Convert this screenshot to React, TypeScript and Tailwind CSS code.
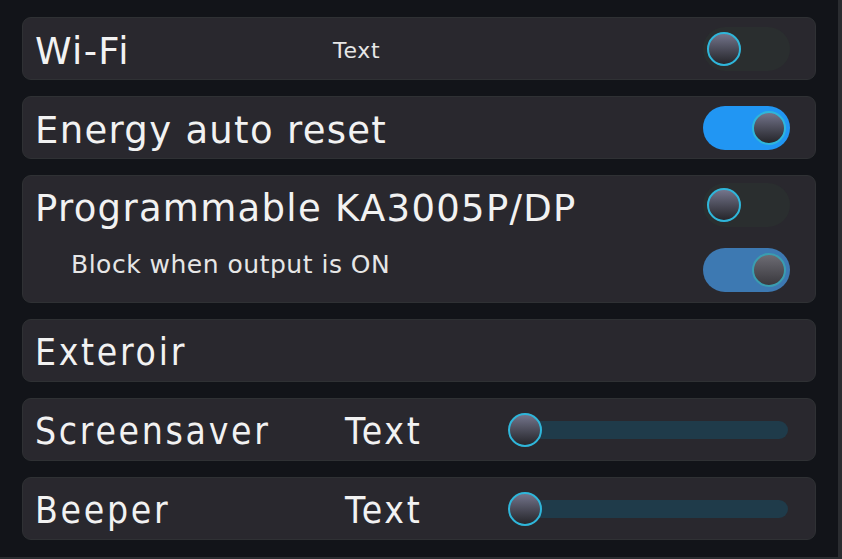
import React from 'react';

function Knob({ dim = false }: { dim?: boolean }) {
  return (
    <div
      className={
        dim
          ? 'h-[34px] w-[34px] rounded-full border-2 border-[#3a9db0] bg-gradient-to-b from-[#6d6c74] to-[#3a393e]'
          : 'h-[34px] w-[34px] rounded-full border-2 border-[#2fb6da] bg-gradient-to-b from-[#74758c] to-[#26262b]'
      }
    />
  );
}

function Toggle({ on = false, dim = false }: { on?: boolean; dim?: boolean }) {
  const track = on ? (dim ? 'bg-[#3d79b2]' : 'bg-[#2196f3]') : 'bg-[#2a2e2f]';
  return (
    <div className={`flex h-[44px] w-[87px] items-center rounded-full px-[4px] ${track} ${on ? 'justify-end' : 'justify-start'}`}>
      <Knob dim={dim} />
    </div>
  );
}

function Slider() {
  return (
    <div className="relative flex h-[34px] flex-1 items-center">
      <div className="ml-[4px] h-[18px] flex-1 rounded-full bg-[#1f3b4a]" />
      <div className="absolute left-0 top-0">
        <Knob />
      </div>
    </div>
  );
}

const card = 'rounded-[9px] border border-[#2f3134] bg-[#29282e]';
const big = "relative font-['DejaVu_Sans',sans-serif] text-[37px] leading-[44px] tracking-[1.3px] text-[#f2f2f2]";
const narrow =
  "relative top-[2px] font-['DejaVu_Sans_Condensed','DejaVu_Sans',sans-serif] font-stretch-condensed text-[37px] leading-[44px] tracking-[2.7px] text-[#f2f2f2]";

export default function App() {
  return (
    <div className="h-[559px] w-[842px] overflow-hidden border-r-4 border-b-2 border-[#2a2c30] bg-[#121419]">
      <div className="flex flex-col gap-4 pl-[22px] pr-[22px] pt-[17px]">
        {/* Wi-Fi */}
        <div className={`${card} flex h-[63px] items-center pl-[12px] pr-[25px]`}>
          <span className={`${big} top-[3px] w-[298px]`}>Wi-Fi</span>
          <span className="relative top-[2px] font-['DejaVu_Sans',sans-serif] text-[22px] tracking-[0.7px] text-[#e6e6e6]">Text</span>
          <div className="flex-1" />
          <Toggle />
        </div>

        {/* Energy */}
        <div className={`${card} flex h-[63px] items-center pl-[12px] pr-[25px]`}>
          <span className={`${big} top-[3px]`}>Energy auto reset</span>
          <div className="flex-1" />
          <Toggle on />
        </div>

        {/* Programmable */}
        <div className={`${card} flex h-[128px] flex-col pl-[12px] pr-[25px] pt-[7px]`}>
          <div className="flex h-[44px] items-center">
            <span className={`${big} top-[4px]`}>Programmable KA3005P/DP</span>
            <div className="flex-1" />
            <Toggle />
          </div>
          <div className="mt-[21px] flex h-[44px] items-center pl-[36px]">
            <span className="relative -top-[5px] font-['DejaVu_Sans',sans-serif] text-[25px] tracking-[0.5px] text-[#e6e6e6]">
              Block when output is ON
            </span>
            <div className="flex-1" />
            <Toggle on dim />
          </div>
        </div>

        {/* Exteroir */}
        <div className={`${card} flex h-[63px] items-center pl-[12px] pr-[25px]`}>
          <span className={narrow}>Exteroir</span>
        </div>

        {/* Screensaver */}
        <div className={`${card} flex h-[63px] items-center pl-[12px] pr-[27px]`}>
          <span className={`${narrow} w-[310px]`}>Screensaver</span>
          <span className={`${narrow} w-[163px]`}>Text</span>
          <Slider />
        </div>

        {/* Beeper */}
        <div className={`${card} flex h-[63px] items-center pl-[12px] pr-[27px]`}>
          <span className={`${narrow} w-[310px]`}>Beeper</span>
          <span className={`${narrow} w-[163px]`}>Text</span>
          <Slider />
        </div>
      </div>
    </div>
  );
}
